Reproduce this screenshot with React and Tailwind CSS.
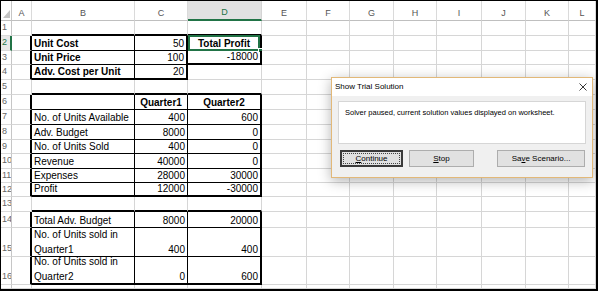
import React from 'react';

const COLS = ['A', 'B', 'C', 'D', 'E', 'F', 'G', 'H', 'I', 'J', 'K', 'L'];
const ROWS = [1, 2, 3, 4, 5, 6, 7, 8, 9, 10, 11, 12, 13, 14, 15, 16, 17];

const TABLES = [
  { r1: 2, r2: 4, c1: 1, c2: 2 },
  { r1: 2, r2: 3, c1: 3, c2: 3 },
  { r1: 6, r2: 12, c1: 1, c2: 3 },
  { r1: 14, r2: 16, c1: 1, c2: 3 },
];

const DATA = {
  '2-1': { t: 'Unit Cost', b: true, a: 'l' },
  '2-2': { t: '50', a: 'r' },
  '2-3': { t: 'Total Profit', b: true, a: 'c' },
  '3-1': { t: 'Unit Price', b: true, a: 'l' },
  '3-2': { t: '100', a: 'r' },
  '3-3': { t: '-18000', a: 'r' },
  '4-1': { t: 'Adv. Cost per Unit', b: true, a: 'l' },
  '4-2': { t: '20', a: 'r' },
  '6-2': { t: 'Quarter1', b: true, a: 'c' },
  '6-3': { t: 'Quarter2', b: true, a: 'c' },
  '7-1': { t: 'No. of Units Available', a: 'l' },
  '7-2': { t: '400', a: 'r' },
  '7-3': { t: '600', a: 'r' },
  '8-1': { t: 'Adv. Budget', a: 'l' },
  '8-2': { t: '8000', a: 'r' },
  '8-3': { t: '0', a: 'r' },
  '9-1': { t: 'No. of Units Sold', a: 'l' },
  '9-2': { t: '400', a: 'r' },
  '9-3': { t: '0', a: 'r' },
  '10-1': { t: 'Revenue', a: 'l' },
  '10-2': { t: '40000', a: 'r' },
  '10-3': { t: '0', a: 'r' },
  '11-1': { t: 'Expenses', a: 'l' },
  '11-2': { t: '28000', a: 'r' },
  '11-3': { t: '30000', a: 'r' },
  '12-1': { t: 'Profit', a: 'l' },
  '12-2': { t: '12000', a: 'r' },
  '12-3': { t: '-30000', a: 'r' },
  '14-1': { t: 'Total Adv. Budget', a: 'l' },
  '14-2': { t: '8000', a: 'r' },
  '14-3': { t: '20000', a: 'r' },
  '15-1': { t: ['No. of Units sold in', 'Quarter1'], a: 'l' },
  '15-2': { t: '400', a: 'r' },
  '15-3': { t: '400', a: 'r' },
  '16-1': { t: ['No. of Units sold in', 'Quarter2'], a: 'l' },
  '16-2': { t: '0', a: 'r' },
  '16-3': { t: '600', a: 'r' },
};

function rightEdge(r, c) {
  let w = 0;
  for (const t of TABLES) {
    if (r < t.r1 || r > t.r2) continue;
    if (c === t.c2 || c === t.c1 - 1) w = Math.max(w, 2);
    else if (c >= t.c1 && c < t.c2) w = Math.max(w, 1);
  }
  return w;
}

function bottomEdge(r, c) {
  let w = 0;
  for (const t of TABLES) {
    if (c < t.c1 || c > t.c2) continue;
    if (r === t.r2 || r === t.r1 - 1) w = Math.max(w, 2);
    else if (r >= t.r1 && r < t.r2) w = Math.max(w, 1);
  }
  return w;
}

const RB = [
  'border-r border-r-[#d6d6d6]',
  'border-r border-r-black',
  'border-r-2 border-r-black',
];
const BB = [
  'border-b border-b-[#d6d6d6]',
  'border-b border-b-black',
  'border-b-2 border-b-black',
];
const AL = {
  l: 'justify-start pl-[2px]',
  r: 'justify-end pr-[2px]',
  c: 'justify-center',
};

function Cell({ r, c }) {
  const d = DATA[`${r}-${c}`];
  const selected = r === 2 && c === 3;
  return (
    <div
      className={`relative flex items-end overflow-visible whitespace-nowrap text-[10px] leading-[12px] text-black ${RB[rightEdge(r, c)]} ${BB[bottomEdge(r, c)]} ${d ? AL[d.a] : ''} ${d && d.b ? 'font-bold' : ''}`}
    >
      {d && Array.isArray(d.t) ? (
        <div className="flex flex-col">
          <span className="leading-[12px]">{d.t[0]}</span>
          <span className="mt-[3px] leading-[12px]">{d.t[1]}</span>
        </div>
      ) : d ? (
        <span>{d.t}</span>
      ) : null}
      {selected && (
        <>
          <div className="pointer-events-none absolute left-0 right-0 -top-[1px] -bottom-[1px] border-2 border-[#217346]" />
          <div className="absolute -right-[3px] -bottom-[3px] h-[5px] w-[5px] border border-white bg-[#217346]" />
        </>
      )}
    </div>
  );
}

function Dialog() {
  return (
    <div className="absolute left-[330px] top-[76px] flex h-[101px] w-[262px] flex-col border border-[#e2b878] bg-[#f0f0f0] shadow-[0_3px_12px_rgba(0,0,0,0.3)]">
      <div className="flex h-[18px] items-center justify-between bg-white pl-[3px] pr-[5px]">
        <span className="text-[8px] leading-[10px] text-black">Show Trial Solution</span>
        <svg width="8" height="8" viewBox="0 0 8 8">
          <path d="M0.5 0.5 L7.5 7.5 M7.5 0.5 L0.5 7.5" stroke="#222" strokeWidth="0.9" fill="none" />
        </svg>
      </div>
      <div className="flex-1 px-[6px] pt-[5px]">
        <div className="h-[43px] border border-[#d6d6d6] bg-white pl-[6px] pt-[6px] text-[7.5px] leading-[10px] text-black">
          Solver paused, current solution values displayed on worksheet.
        </div>
        <div className="mt-[6px] flex pl-[2px] pr-[1px]">
          <div className="flex h-[17px] w-[63px] items-center justify-center border-2 border-[#3a3a3a] bg-[#e1e1e1] p-[1px]">
            <div className="flex h-full w-full items-center justify-center border border-dotted border-[#444] text-[8px] leading-[10px] text-black">
              <span>
                <span className="underline">C</span>ontinue
              </span>
            </div>
          </div>
          <div className="ml-[6px] flex h-[17px] w-[65px] items-center justify-center border border-[#adadad] bg-[#e1e1e1] text-[8px] leading-[10px] text-black">
            <span>
              <span className="underline">S</span>top
            </span>
          </div>
          <div className="ml-auto flex h-[17px] w-[88px] items-center justify-center border border-[#adadad] bg-[#e1e1e1] text-[8px] leading-[10px] text-black">
            <span>
              Sa<span className="underline">v</span>e Scenario...
            </span>
          </div>
        </div>
      </div>
    </div>
  );
}

export default function App() {
  return (
    <div className="h-[293px] w-[600px] bg-white font-['Liberation_Sans',Arial,sans-serif]">
      <div className="relative h-[291px] w-[598px] overflow-hidden border-b-2 border-l border-r-2 border-t border-black">
        <div className="grid h-full grid-cols-[11px_20px_103px_53px_74px_45px_43px_44px_43px_45px_44px_43px_1fr] grid-rows-[20px_15px_15px_14px_15px_15px_15px_15px_15px_14px_15px_14px_14px_15px_16px_29px_28px_1fr]">
          <div className="flex items-end justify-end border-b border-r border-b-[#bfbfbf] border-r-[#c6c6c6] pb-[2px] pr-[1px]">
            <svg width="7" height="8" viewBox="0 0 7 8">
              <polygon points="7,0 7,8 0,8" fill="#c4c4c4" />
            </svg>
          </div>
          {COLS.map((col, i) =>
            i === 3 ? (
              <div
                key={col}
                className="flex items-center justify-center border-b-2 border-r border-b-[#217346] border-r-[#d4d4d4] bg-[#e1e1e1] pt-[6px] text-[9px] text-[#217346]"
              >
                {col}
              </div>
            ) : (
              <div
                key={col}
                className="flex items-center justify-center border-b border-r border-b-[#bfbfbf] border-r-[#dadada] pt-[6px] text-[9px] text-[#555]"
              >
                {col}
              </div>
            )
          )}
          {ROWS.map((r) => (
            <React.Fragment key={r}>
              {r === 2 ? (
                <div className="flex items-center border-b border-r-2 border-b-[#dadada] border-r-[#217346] bg-[#e8e8e8] pl-[1px] text-[9px] text-[#217346]">
                  {r}
                </div>
              ) : (
                <div
                  className={`flex overflow-hidden border-b border-r border-b-[#dadada] border-r-[#c6c6c6] pl-[1px] text-[9px] text-[#666] ${r === 15 || r === 16 ? 'items-end pb-[1px]' : 'items-center'}`}
                >
                  {r === 17 ? '' : r}
                </div>
              )}
              {COLS.map((col, c) => (
                <Cell key={col} r={r} c={c} />
              ))}
            </React.Fragment>
          ))}
        </div>
        <Dialog />
      </div>
    </div>
  );
}
